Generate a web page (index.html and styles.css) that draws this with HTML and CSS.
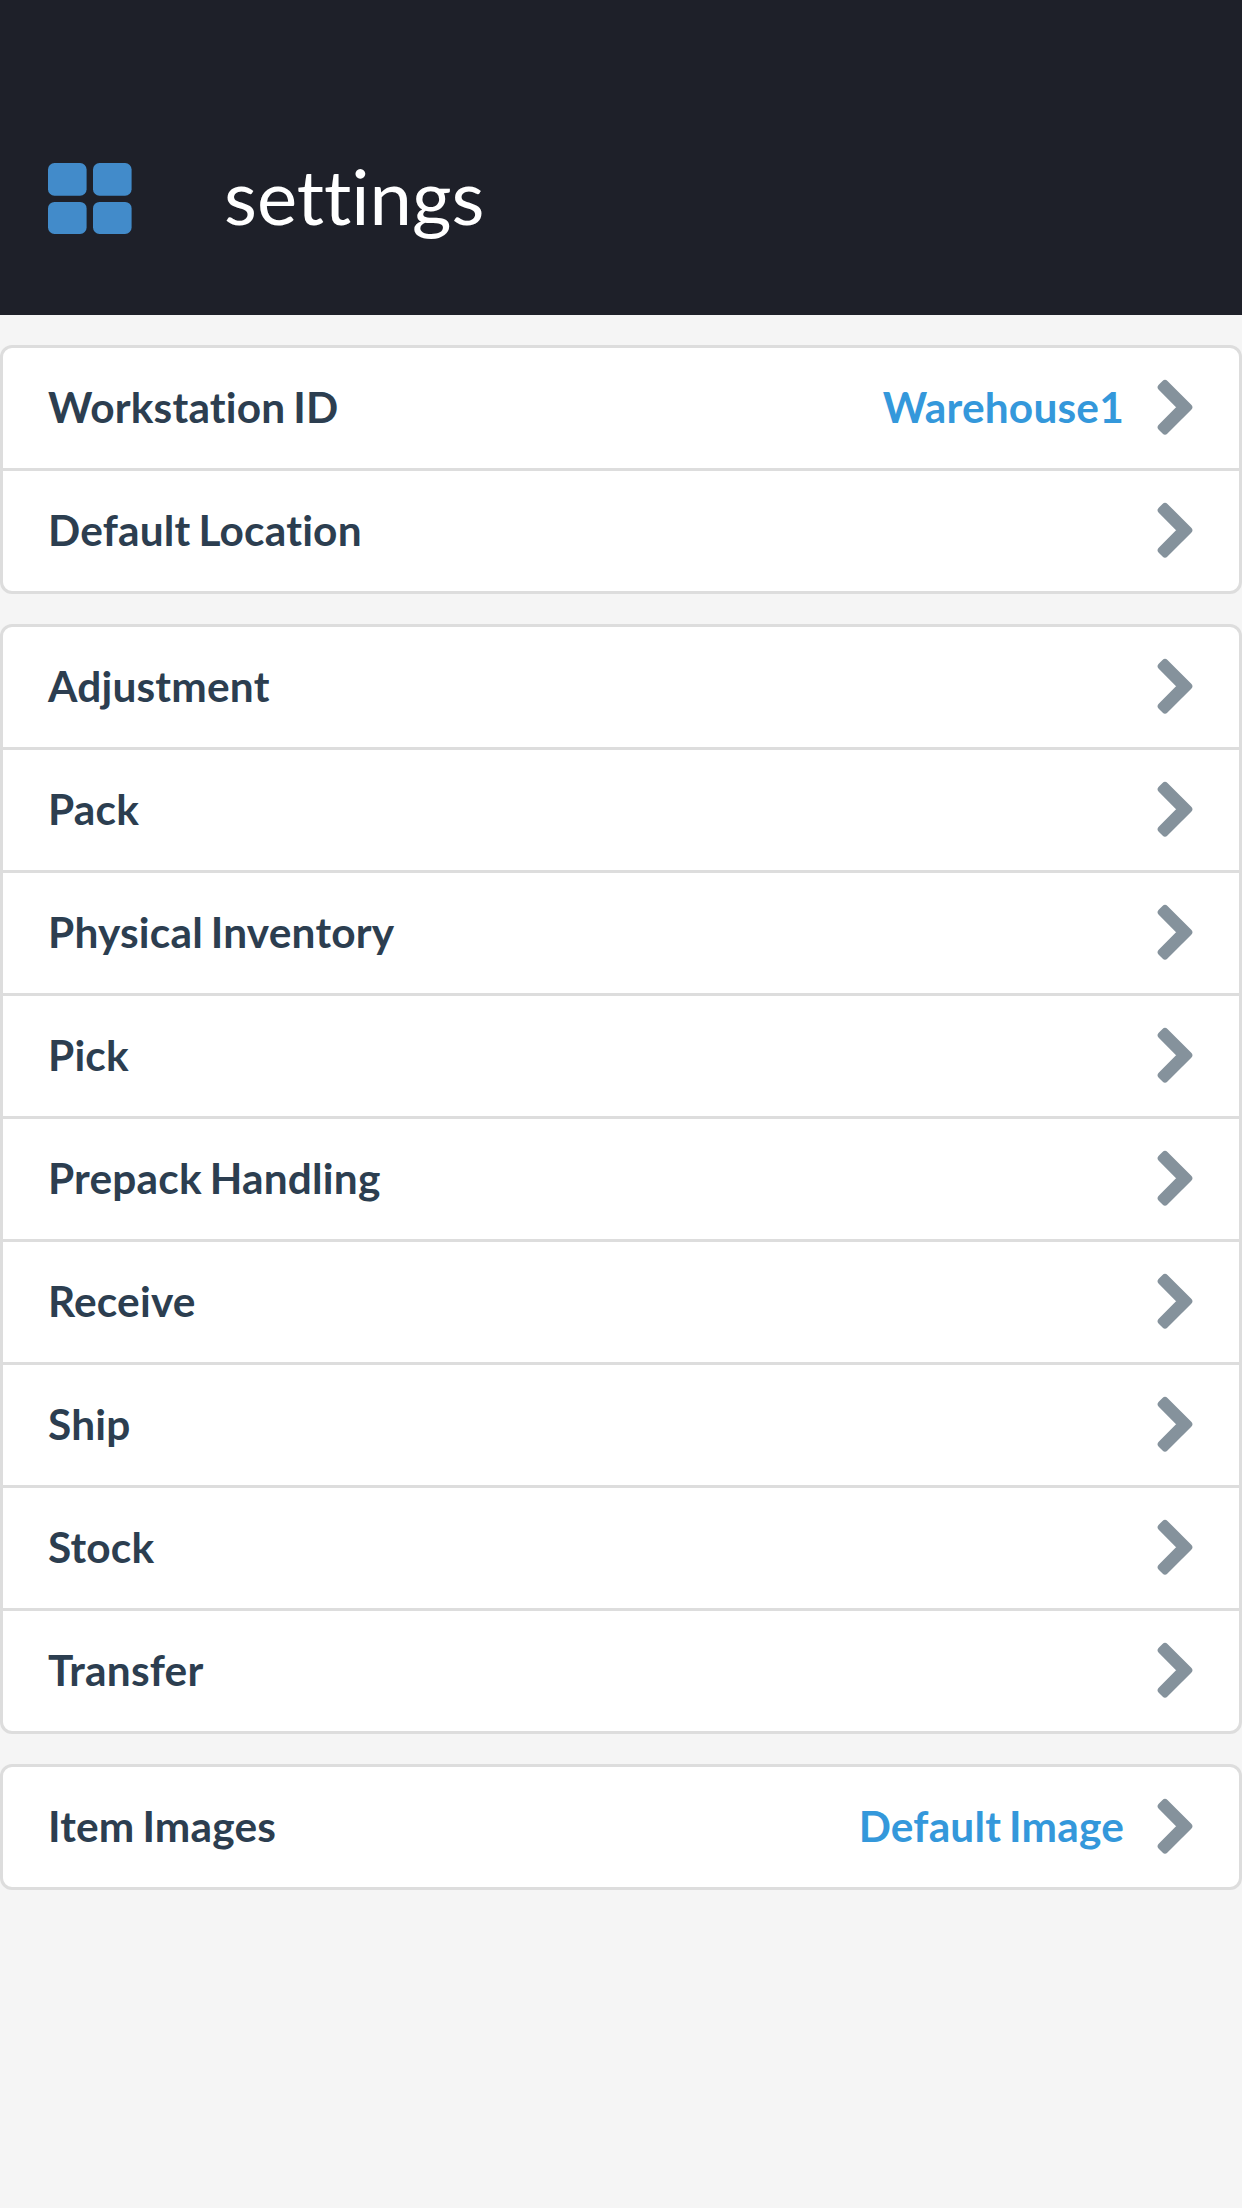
FILE: index.html
```html
<!DOCTYPE html>
<html lang="en">
<head>
<meta charset="utf-8">
<title>settings</title>
<link rel="stylesheet" href="styles.css">
</head>
<body>
<svg width="0" height="0" class="defs" aria-hidden="true">
  <symbol id="chevron" viewBox="0 0 40 58"><path d="M10 5.4 33.8 29.2 10 53 6.2 49.2 26 29.2 6.2 9.2Z" fill="currentColor" stroke="currentColor" stroke-width="7" stroke-linejoin="round"/></symbol>
</svg>
<header class="header">
  <svg class="menu-icon" viewBox="0 0 86 72">
    <rect x="1" y="1.1" width="38.6" height="32.6" rx="6.5"/>
    <rect x="46" y="1.1" width="38.6" height="32.6" rx="6.5"/>
    <rect x="1" y="39.9" width="38.6" height="32" rx="6.5"/>
    <rect x="46" y="39.9" width="38.6" height="32" rx="6.5"/>
  </svg>
  <h1 class="title">settings</h1>
</header>
<main class="content">
  <ul class="group">
    <li class="row"><span class="label">Workstation ID</span><span class="value">Warehouse1</span><svg class="chevron"><use href="#chevron"/></svg></li>
    <li class="row"><span class="label">Default Location</span><svg class="chevron"><use href="#chevron"/></svg></li>
  </ul>
  <ul class="group">
    <li class="row"><span class="label">Adjustment</span><svg class="chevron"><use href="#chevron"/></svg></li>
    <li class="row"><span class="label">Pack</span><svg class="chevron"><use href="#chevron"/></svg></li>
    <li class="row"><span class="label">Physical Inventory</span><svg class="chevron"><use href="#chevron"/></svg></li>
    <li class="row"><span class="label">Pick</span><svg class="chevron"><use href="#chevron"/></svg></li>
    <li class="row"><span class="label">Prepack Handling</span><svg class="chevron"><use href="#chevron"/></svg></li>
    <li class="row"><span class="label">Receive</span><svg class="chevron"><use href="#chevron"/></svg></li>
    <li class="row"><span class="label">Ship</span><svg class="chevron"><use href="#chevron"/></svg></li>
    <li class="row"><span class="label">Stock</span><svg class="chevron"><use href="#chevron"/></svg></li>
    <li class="row"><span class="label">Transfer</span><svg class="chevron"><use href="#chevron"/></svg></li>
  </ul>
  <ul class="group">
    <li class="row"><span class="label">Item Images</span><span class="value">Default Image</span><svg class="chevron"><use href="#chevron"/></svg></li>
  </ul>
</main>
</body>
</html>
```
FILE: styles.css
```css
* { box-sizing: border-box; }
body {
  margin: 0;
  min-height: 2208px;
  background: #f5f5f5;
  font-family: Lato, "Liberation Sans", sans-serif;
  font-variant-ligatures: none;
  color: #2c3e50;
}
.defs { display: none; }
.header {
  display: flex;
  align-items: center;
  height: 315px;
  padding: 81px 47px 0;
  background: #1e2029;
}
.menu-icon {
  width: 86px;
  height: 72px;
  margin-right: 91px;
  fill: #428bca;
}
.title {
  margin: 0;
  padding-bottom: 4px;
  font-size: 76px;
  font-weight: 400;
  line-height: 90px;
  color: #fff;
}
.content {
  display: flex;
  flex-direction: column;
  gap: 30px;
  padding-top: 30px;
}
.group {
  margin: 0;
  padding: 0;
  list-style: none;
  background: #fff;
  border: 3px solid #ddd;
  border-radius: 12px;
}
.row {
  display: flex;
  align-items: center;
  height: 120px;
  padding: 0 44px 2px 45px;
  font-size: 42.4px;
  font-weight: 700;
  line-height: 60px;
  letter-spacing: 0.2px;
  word-spacing: -2.6px;
}
.row + .row {
  height: 123px;
  border-top: 3px solid #ddd;
}
.label { flex: 1; }
.value { color: #3498db; }
.chevron {
  width: 40px;
  height: 58px;
  margin-left: 31px;
  color: #85929c;
}
```
